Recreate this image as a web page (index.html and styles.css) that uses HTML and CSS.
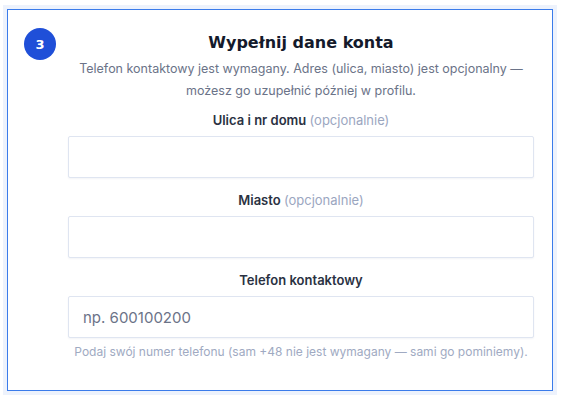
FILE: index.html
```html
<!DOCTYPE html>
<html lang="pl">
<head>
  <meta charset="UTF-8">
  <meta name="viewport" content="width=device-width, initial-scale=1.0">
  <title>Rejestracja - dane konta</title>
  <link rel="stylesheet" href="styles.css">
</head>
<body>
  <div class="step-ring">
    <section class="step-card">
      <div class="step-number">3</div>
      <div class="step-body">
        <h2>Wypełnij dane konta</h2>
        <p class="step-intro">Telefon kontaktowy jest wymagany. Adres (ulica, miasto) jest opcjonalny — możesz go uzupełnić później w profilu.</p>
        <form class="account-form">
          <div class="field">
            <label for="street">Ulica i nr domu <span class="optional">(opcjonalnie)</span></label>
            <input type="text" id="street">
          </div>
          <div class="field">
            <label for="city">Miasto <span class="optional">(opcjonalnie)</span></label>
            <input type="text" id="city">
          </div>
          <div class="field">
            <label for="phone">Telefon kontaktowy</label>
            <input type="tel" id="phone" placeholder="np. 600100200">
            <p class="hint">Podaj swój numer telefonu (sam +48 nie jest wymagany — sami go pominiemy).</p>
          </div>
        </form>
      </div>
    </section>
  </div>
</body>
</html>
```

FILE: styles.css
```css
body {
  font-family: Inter, "Noto Sans", sans-serif;
  margin: 0;
  padding: 5px 8px 8px 3px;
  background-color: #fff;
}

.step-ring {
  background: #edf2fc;
  padding: 4px;
}

.step-card {
  display: flex;
  gap: 12px;
  background: #fff;
  border: 1px solid #3b7bea;
  padding: 18px 18px 31px 16px;
}

.step-number {
  flex: none;
  width: 32px;
  height: 32px;
  border-radius: 50%;
  background: #1f4fd8;
  color: #fff;
  font-family: "DejaVu Sans", sans-serif;
  font-weight: bold;
  font-size: 13px;
  display: flex;
  align-items: center;
  justify-content: center;
}

.step-body {
  flex: 1;
  text-align: center;
}

h2 {
  font-family: "DejaVu Sans", sans-serif;
  font-size: 16px;
  font-weight: bold;
  color: #141a2b;
  margin: 5px 0 6px;
}

.step-intro {
  font-size: 12.5px;
  line-height: 22px;
  color: #6b7388;
  margin: 0 0 10px;
}

.account-form {
  display: flex;
  flex-direction: column;
  gap: 14px;
}

.field {
  display: flex;
  flex-direction: column;
}

label {
  font-size: 13px;
  font-weight: 600;
  color: #2a3142;
  margin-bottom: 8px;
}

.optional {
  font-weight: normal;
  color: #9ba6bf;
}

input {
  height: 42px;
  box-sizing: border-box;
  padding: 0 14px;
  font-family: inherit;
  font-size: 15px;
  color: #2a3142;
  border: 1px solid #dfe5f1;
  border-radius: 2px;
  box-shadow: 0 1px 2px rgba(20, 40, 90, 0.05);
}

input::placeholder {
  color: #6b7388;
}

.hint {
  font-size: 12px;
  color: #a0aac2;
  margin: 6px 0 0;
}
```
